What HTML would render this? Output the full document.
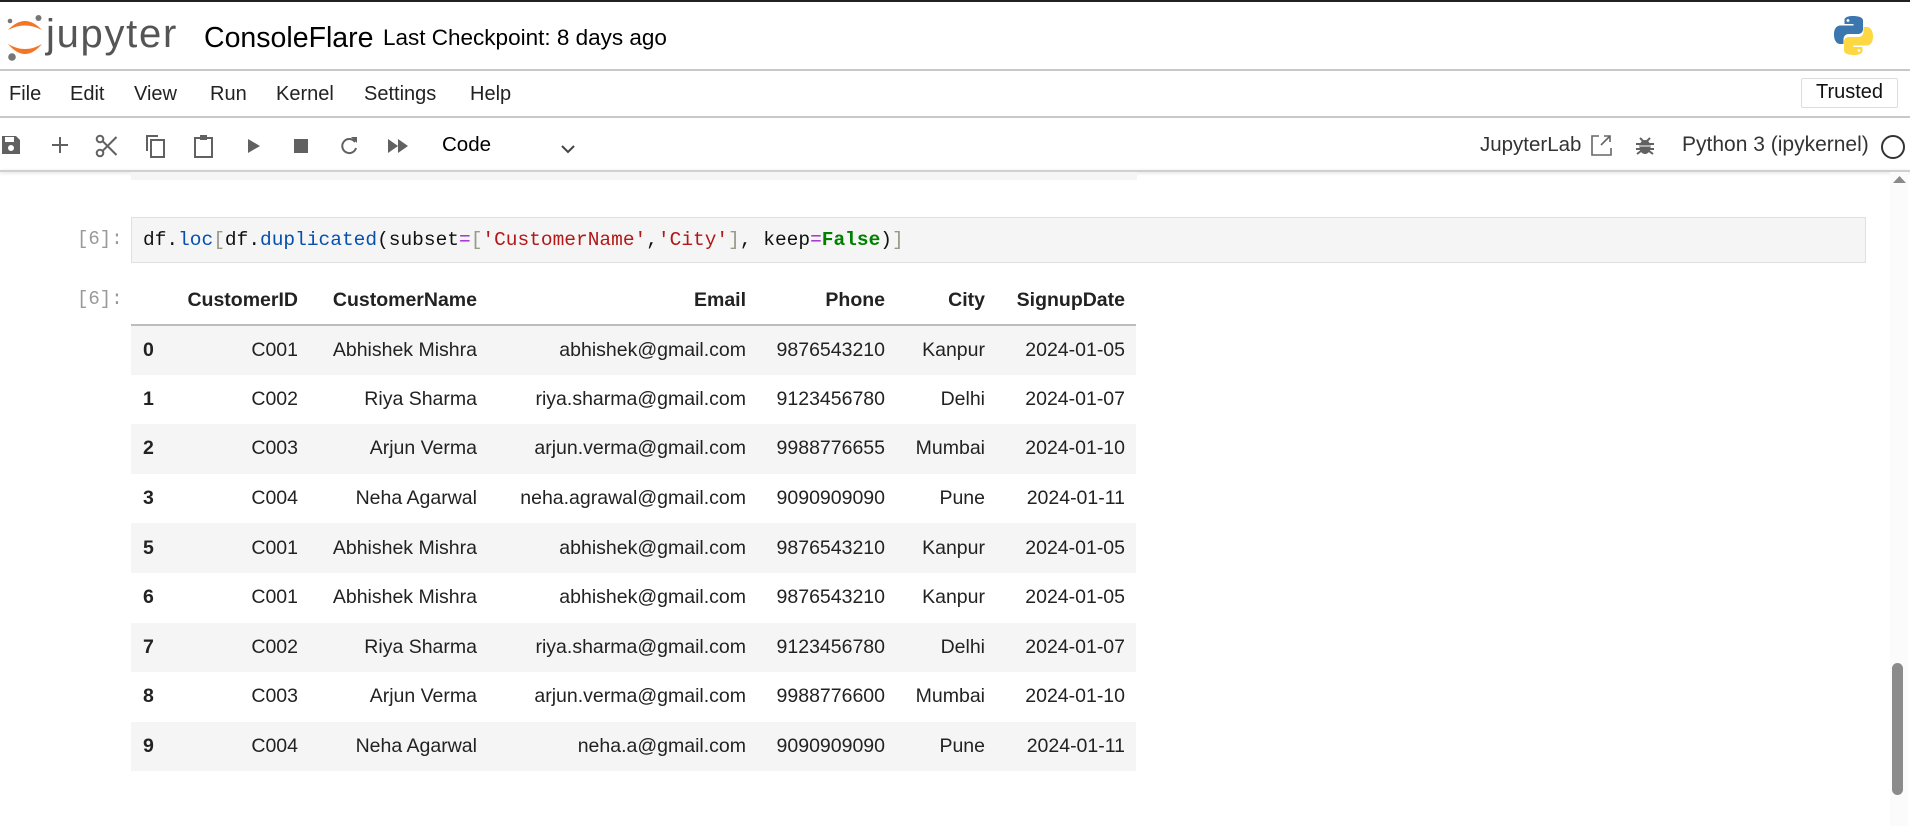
<!DOCTYPE html>
<html><head><meta charset="utf-8"><style>
*{margin:0;padding:0;box-sizing:border-box}
body{width:1910px;height:826px;overflow:hidden;background:#fff;font-family:"Liberation Sans",sans-serif;color:#111;position:relative}
.abs{position:absolute}
.hline{position:absolute;left:0;width:1910px;height:2px;background:#c8c8c8}
.menu span{position:absolute;top:83px;font-size:20px;color:#222}
.ico{position:absolute;top:134px}
.mono{font-family:"Liberation Mono",monospace}
table{position:absolute;left:131px;top:277px;border-collapse:collapse;font-size:19.5px;color:#222}
td,th{text-align:right;padding:0;height:49.6px;white-space:nowrap}
th{font-weight:bold;height:48px;border-bottom:2px solid #bdbdbd;vertical-align:middle}
tbody tr:nth-child(odd){background:#f5f5f5}
tbody th{border:none;text-align:left;padding-left:12px}
</style></head><body>
<div class="abs" style="left:0;top:0;width:1910px;height:2px;background:#222"></div>
<svg class="abs" style="left:0;top:8px" width="50" height="56" viewBox="0 0 50 56">
<path d="M8 22 Q25 4 42 22 Q25 13 8 22Z" fill="#f37626"/>
<path d="M8 36 Q25 56 42 36 Q25 46 8 36Z" fill="#f37626"/>
<circle cx="10" cy="13" r="2.3" fill="#767677"/>
<circle cx="38.5" cy="10" r="3" fill="#767677"/>
<circle cx="12" cy="49" r="3.8" fill="#767677"/>
</svg>
<div class="abs" style="left:46px;top:12px;font-size:40px;color:#555;letter-spacing:1.7px">jupyter</div>
<div class="abs" style="left:204px;top:22px;font-size:28.5px;color:#000">ConsoleFlare</div>
<div class="abs" style="left:383px;top:25px;font-size:22.5px;color:#000">Last Checkpoint: 8 days ago</div>
<svg class="abs" style="left:1833px;top:15px" width="42" height="41" viewBox="0 0 42 41">
<path d="M20 1c-9 0-8.5 4-8.5 4v4h9v1.5H7.5S1 10 1 19.5 7 29 7 29h3.5v-4.5s-.2-5.5 5.5-5.5h9s5 .1 5-5V5.5S30.5 1 20 1z" fill="#3b76ae"/>
<circle cx="15" cy="5.5" r="1.4" fill="#fff"/>
<path d="M21 40c9 0 8.5-4 8.5-4v-4h-9v-1.5h13s6.5.5 6.5-9-6-9.5-6-9.5h-3.5v4.5s.2 5.5-5.5 5.5h-9s-5-.1-5 5v8.5S10.5 40 21 40z" fill="#fdd843"/>
<circle cx="26" cy="35.5" r="1.4" fill="#fff"/>
</svg>
<div class="hline" style="top:69px"></div>
<div class="menu"><span style="left:9px">File</span><span style="left:70px">Edit</span><span style="left:134px">View</span><span style="left:210px">Run</span><span style="left:276px">Kernel</span><span style="left:364px">Settings</span><span style="left:470px">Help</span></div>
<div class="abs" style="left:1801px;top:78px;width:97px;height:30px;border:1px solid #ddd;border-radius:2px;font-size:20px;text-align:center;line-height:27px;color:#111">Trusted</div>
<div class="hline" style="top:116px"></div>
<svg class="ico" style="left:0" width="22" height="22" viewBox="0 0 22 22"><path d="M2 2h14l4 4v14H2z" fill="#616161"/><rect x="5" y="3" width="9" height="5" fill="#fff"/><circle cx="11" cy="14" r="3" fill="#fff"/></svg>
<svg class="ico" style="left:51px" width="18" height="22" viewBox="0 0 18 22"><path d="M9 3v16M1 11h16" stroke="#616161" stroke-width="2"/></svg>
<svg class="ico" style="left:95px" width="24" height="24" viewBox="0 0 24 24"><circle cx="5" cy="5" r="3.3" fill="none" stroke="#616161" stroke-width="2"/><circle cx="5" cy="19" r="3.3" fill="none" stroke="#616161" stroke-width="2"/><path d="M7.5 7l14 14M7.5 17l14-14" stroke="#616161" stroke-width="2"/></svg>
<svg class="ico" style="left:145px" width="22" height="24" viewBox="0 0 22 24"><path d="M2 17V2h11" fill="none" stroke="#616161" stroke-width="2"/><rect x="6" y="6" width="13" height="17" fill="none" stroke="#616161" stroke-width="2"/></svg>
<svg class="ico" style="left:193px" width="22" height="24" viewBox="0 0 22 24"><rect x="2" y="4" width="17" height="19" fill="none" stroke="#616161" stroke-width="2"/><rect x="7" y="1" width="7" height="5" fill="#616161"/></svg>
<svg class="ico" style="left:247px;top:138px" width="14" height="16" viewBox="0 0 14 16"><path d="M1 1l12 7-12 7z" fill="#616161"/></svg>
<div class="abs" style="left:294px;top:139px;width:14px;height:14px;background:#616161"></div>
<svg class="ico" style="left:339px" width="20" height="22" viewBox="0 0 20 22"><path d="M16 8a7 7 0 1 0 1 6" fill="none" stroke="#616161" stroke-width="2"/><path d="M12 3h6v6z" fill="#616161"/></svg>
<svg class="ico" style="left:387px;top:139px" width="22" height="14" viewBox="0 0 22 14"><path d="M1 0l10 7-10 7zM11 0l10 7-10 7z" fill="#616161"/></svg>
<div class="abs" style="left:442px;top:133px;font-size:20.5px;color:#000">Code</div>
<svg class="abs" style="left:561px;top:145px" width="14" height="10" viewBox="0 0 14 10"><path d="M1 1l6 6 6-6" fill="none" stroke="#444" stroke-width="2"/></svg>
<div class="abs" style="left:1480px;top:133px;font-size:20.5px;color:#333">JupyterLab</div>
<svg class="abs" style="left:1590px;top:134px" width="22" height="22" viewBox="0 0 22 22"><path d="M9 2H2v19h19v-7" fill="none" stroke="#666" stroke-width="1.6"/><path d="M11 11L20 2M14 2h6v6" fill="none" stroke="#666" stroke-width="1.6"/></svg>
<svg class="abs" style="left:1636px;top:136px" width="18" height="20" viewBox="0 0 18 20"><ellipse cx="9" cy="11" rx="5.5" ry="7" fill="#616161"/><path d="M0 8h18M0 13h18M1 18l4-3M17 18l-4-3M4 2l3 3M14 2l-3 3" stroke="#616161" stroke-width="2"/><path d="M4 10h10" stroke="#fff" stroke-width="1"/></svg>
<div class="abs" style="left:1682px;top:133px;font-size:21px;color:#333">Python 3 (ipykernel)</div>
<div class="abs" style="left:1881px;top:135px;width:24px;height:24px;border:2px solid #333;border-radius:50%"></div>
<div class="hline" style="top:170px;background:#d0d0d0;box-shadow:0 1px 3px rgba(0,0,0,.15)"></div>
<div class="abs" style="left:131px;top:172px;width:1006px;height:8px;background:#f5f5f5"></div>
<div class="abs" style="left:1890px;top:172px;width:18px;height:654px;background:#fbfbfb"></div>
<svg class="abs" style="left:1893px;top:175px" width="13" height="9" viewBox="0 0 13 9"><path d="M0 8L6.5 1 13 8z" fill="#8a8a8a"/></svg>
<div class="abs" style="left:1892px;top:663px;width:11px;height:132px;background:#8b8b8b;border-radius:6px"></div>
<div class="abs mono" style="left:77px;top:228px;font-size:19px;color:#999">[6]:</div>
<div class="abs" style="left:131px;top:217px;width:1735px;height:46px;background:#f5f5f5;border:1px solid #e0e0e0"></div>
<div class="abs mono" style="left:143px;top:229px;font-size:19.5px;color:#111;white-space:pre">df.<span style="color:#0550ae">loc</span><span style="color:#998">[</span>df.<span style="color:#0550ae">duplicated</span>(subset<span style="color:#a020d0">=</span><span style="color:#998">[</span><span style="color:#b21818">'CustomerName'</span>,<span style="color:#b21818">'City'</span><span style="color:#998">]</span>, keep<span style="color:#a020d0">=</span><span style="color:#008000;font-weight:bold">False</span>)<span style="color:#998">]</span></div>
<div class="abs mono" style="left:77px;top:288px;font-size:19px;color:#999">[6]:</div>
<table>
<colgroup><col style="width:40px"><col style="width:127px"><col style="width:179px"><col style="width:269px"><col style="width:139px"><col style="width:100px"><col style="width:151px"></colgroup>
<thead><tr><th></th><th>CustomerID</th><th>CustomerName</th><th>Email</th><th>Phone</th><th>City</th><th style="padding-right:11px">SignupDate</th></tr></thead>
<tbody>
<tr><th>0</th><td>C001</td><td>Abhishek Mishra</td><td>abhishek@gmail.com</td><td>9876543210</td><td>Kanpur</td><td style="padding-right:11px">2024-01-05</td></tr>
<tr><th>1</th><td>C002</td><td>Riya Sharma</td><td>riya.sharma@gmail.com</td><td>9123456780</td><td>Delhi</td><td style="padding-right:11px">2024-01-07</td></tr>
<tr><th>2</th><td>C003</td><td>Arjun Verma</td><td>arjun.verma@gmail.com</td><td>9988776655</td><td>Mumbai</td><td style="padding-right:11px">2024-01-10</td></tr>
<tr><th>3</th><td>C004</td><td>Neha Agarwal</td><td>neha.agrawal@gmail.com</td><td>9090909090</td><td>Pune</td><td style="padding-right:11px">2024-01-11</td></tr>
<tr><th>5</th><td>C001</td><td>Abhishek Mishra</td><td>abhishek@gmail.com</td><td>9876543210</td><td>Kanpur</td><td style="padding-right:11px">2024-01-05</td></tr>
<tr><th>6</th><td>C001</td><td>Abhishek Mishra</td><td>abhishek@gmail.com</td><td>9876543210</td><td>Kanpur</td><td style="padding-right:11px">2024-01-05</td></tr>
<tr><th>7</th><td>C002</td><td>Riya Sharma</td><td>riya.sharma@gmail.com</td><td>9123456780</td><td>Delhi</td><td style="padding-right:11px">2024-01-07</td></tr>
<tr><th>8</th><td>C003</td><td>Arjun Verma</td><td>arjun.verma@gmail.com</td><td>9988776600</td><td>Mumbai</td><td style="padding-right:11px">2024-01-10</td></tr>
<tr><th>9</th><td>C004</td><td>Neha Agarwal</td><td>neha.a@gmail.com</td><td>9090909090</td><td>Pune</td><td style="padding-right:11px">2024-01-11</td></tr>
</tbody></table>
</body></html>
